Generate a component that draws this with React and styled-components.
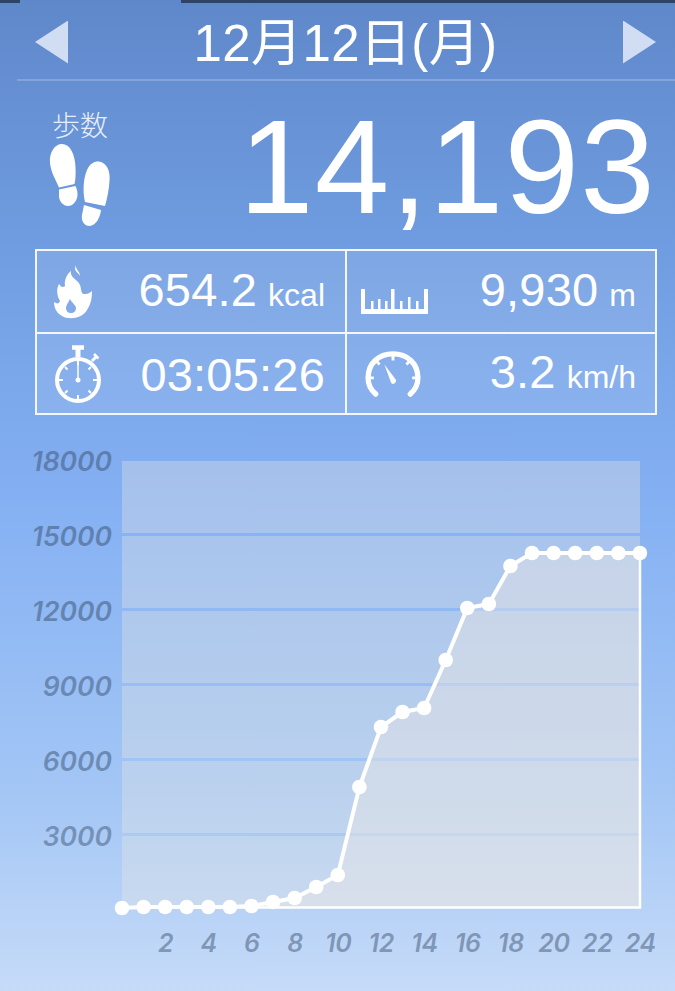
import React from "react";
import styled, { createGlobalStyle } from "styled-components";

const GlobalStyle = createGlobalStyle`
  html, body {
    margin: 0;
    padding: 0;
  }
  body {
    font-family: "Liberation Sans", "Noto Sans CJK JP", sans-serif;
  }
`;

const Page = styled.div`
  width: 675px;
  height: 991px;
  overflow: hidden;
  color: #fff;
  background: linear-gradient(180deg, #5f88ca 0%, #6f9ce0 24%, #84b0f3 50%, #a3c6f5 80%, #c6dbf8 100%);
`;

const TopStrip = styled.div`
  height: 3px;
  display: flex;
`;

const StripPart = styled.div`
  width: ${(p) => p.$width}px;
  flex: ${(p) => (p.$width ? "none" : 1)};
  background: ${(p) => (p.$dark ? "#2e4366" : "transparent")};
`;

const DateBar = styled.div`
  height: 76px;
  margin-left: 17px;
  padding: 0 19px 0 18px;
  display: flex;
  align-items: center;
  justify-content: space-between;
  border-bottom: 2px solid rgba(255, 255, 255, 0.2);
`;

const Arrow = styled.div`
  width: 33px;
  height: 43px;
  margin-top: 2px;
  background: #d0ddf2;
  clip-path: ${(p) =>
    p.$right ? "polygon(0 0, 100% 50%, 0 100%)" : "polygon(100% 0, 0 50%, 100% 100%)"};
`;

const DateText = styled.div`
  font-size: 51px;
  line-height: 60px;
  margin-top: 5px;
  letter-spacing: 0.4px;
`;

const StepsRow = styled.div`
  height: 168px;
  padding: 0 19px 0 49px;
  display: flex;
  align-items: flex-start;
  justify-content: space-between;
`;

const StepsSide = styled.div`
  display: flex;
  flex-direction: column;
  padding-top: 29px;
`;

const StepsLabel = styled.div`
  font-size: 28px;
  line-height: 33px;
  font-weight: 300;
  padding-left: 3px;
  color: #e6eefa;
`;

const StepsValue = styled.div`
  font-size: 134px;
  line-height: 168px;
  letter-spacing: 1.2px;
  margin-top: 2px;
`;

const StatsGrid = styled.div`
  margin: 0 18px 0 35px;
  height: 166px;
  box-sizing: border-box;
  border: 2px solid #f4f8fe;
  display: grid;
  grid-template-columns: 308px 1fr;
  grid-template-rows: 1fr 1fr;
  background: rgba(255, 255, 255, 0.1);
`;

const StatCell = styled.div`
  display: flex;
  align-items: center;
  justify-content: space-between;
  padding: 0 ${(p) => (p.$right ? 19 : 20)}px 0 ${(p) => (p.$right ? 14 : 17)}px;
  border-left: ${(p) => (p.$right ? "2px solid #f4f8fe" : "none")};
  border-top: ${(p) => (p.$lower ? "2px solid #f4f8fe" : "none")};
`;

const IconSlot = styled.div`
  display: flex;
  margin-top: ${(p) => p.$top || 0}px;
  margin-left: ${(p) => p.$left || 0}px;
`;

const StatValue = styled.div`
  font-size: 47px;
  line-height: 52px;
  letter-spacing: 0.2px;
  margin-top: 2px;
`;

const StatUnit = styled.span`
  font-size: 32px;
  letter-spacing: 0;
  margin-left: 11px;
`;

const Chart = styled.div`
  margin-top: 46px;
  display: flex;
`;

const YAxis = styled.div`
  width: 112px;
  margin: -15px 10px 0 0;
  display: flex;
  flex-direction: column;
  align-items: flex-end;
  gap: 45.1px;
`;

const AxisLabel = styled.div`
  font-family: Inter, "Liberation Sans", sans-serif;
  font-size: 26.5px;
  line-height: 30px;
  font-style: italic;
  font-weight: 600;
  color: rgba(70, 95, 130, ${(p) => p.$alpha});
`;

const Plot = styled.div`
  position: relative;
  width: 518px;
  height: 447px;
  display: flex;
  flex-direction: column;
  gap: 3px;
`;

const Band = styled.div`
  flex: 1;
  background: rgba(238, 234, 226, 0.33);
`;

const PlotLines = styled.svg`
  position: absolute;
  left: 0;
  top: 0;
  overflow: visible;
`;

const XAxis = styled.div`
  margin-top: 20px;
  padding-left: 144px;
  display: flex;
`;

const XCell = styled(AxisLabel)`
  width: 43.17px;
  text-align: center;
  font-size: 25px;
  letter-spacing: -0.3px;
  color: rgba(75, 95, 125, 0.55);
`;

const STEP_X = 21.58;
const HEIGHTS = [0, 1, 1, 1, 1, 1, 2, 6, 10, 21, 33, 121, 181, 196, 200, 248, 300, 304, 342, 355, 355, 355, 355, 355, 355];
const PLOT_H = 447;

const points = HEIGHTS.map((h, i) => [i * STEP_X, PLOT_H - h]);
const linePath = points.map(([x, y]) => `${x.toFixed(1)},${y}`).join(" ");

const Footprints = () => (
  <svg width="62" height="84" viewBox="0 0 62 84" fill="#fff">
    <path d="M1 20C0 9 6 1 13 1C21 1 26 11 26.5 24C26.8 31 26.5 37 25.5 41L10 44.5C7 37 2 30 1 20Z" />
    <path d="M10 46.5L26.5 43C30 50 29 58 23 62C16 65 11 60 10 54Z" />
    <path d="M36 59C33.5 48 34.5 35 38 27C41 20 46 18 50 18.5C58 20 61.5 28 60.5 38C60 47 58 56 56 63Z" />
    <path d="M35 62L52 67C51 75 47 82 41 83C35 83 32 78 33 72Z" />
  </svg>
);

const FlameIcon = () => (
  <svg width="40" height="54" viewBox="0 0 40 54" fill="#fff">
    <path d="M22 0C21 4 26 6 26 11C25 8 21 7 21 3Z" />
    <path
      fillRule="evenodd"
      d="M14 53C6 52 0 46 0 37C3 39 5 39 6 36C3 31 2 24 5 19C7 22 9 23 11 21C10 15 13 9 17 6C16 11 20 13 24 17C28 21 26 26 29 29C32 29 35 29 38 26C38 33 37 39 33 45C30 50 24 54 14 53ZM16 34C14 38 12 40 12 43C12 46 14 48 17 48C20 48 22 46 22 43C22 40 18 38 16 34Z"
    />
  </svg>
);

const StopwatchIcon = () => (
  <svg width="50" height="60" viewBox="0 0 50 60" fill="none" stroke="#fff">
    <circle cx="24" cy="36" r="21" strokeWidth="4" />
    <path d="M18 3.5H30" strokeWidth="4.5" />
    <path d="M24 4V13" strokeWidth="5" />
    <path d="M38 17L42 13" strokeWidth="3" />
    <path d="M40 10L44.5 14.5" strokeWidth="2.5" />
    <path d="M24 17V21M24 51V55M5 36H9M39 36H43M11 23L13.5 25.5M37 23L34.5 25.5M11 49L13.5 46.5M37 49L34.5 46.5" strokeWidth="2" />
    <path d="M24 20V35" strokeWidth="1.5" />
    <circle cx="24" cy="36" r="2.5" fill="#fff" stroke="none" />
  </svg>
);

const RulerIcon = () => (
  <svg width="68" height="28" viewBox="0 0 68 28" fill="#fff">
    <rect x="0" y="21" width="67" height="5" />
    <rect x="0" y="1" width="4" height="22" />
    <rect x="63" y="1" width="4" height="22" />
    <rect x="30" y="1" width="3.5" height="22" />
    <rect x="10" y="13" width="2.5" height="10" />
    <rect x="17" y="11" width="2.5" height="12" />
    <rect x="24" y="13" width="2.5" height="10" />
    <rect x="39" y="13" width="2.5" height="10" />
    <rect x="47" y="9" width="2.5" height="14" />
    <rect x="55" y="13" width="2.5" height="10" />
  </svg>
);

const GaugeIcon = () => (
  <svg width="56" height="46" viewBox="0 0 58 48" fill="none" stroke="#fff">
    <path d="M11 45C5 40 3 34 3 28C3 13 14 3 29 3C44 3 55 13 55 28C55 34 53 40 47 45" strokeWidth="5.5" strokeLinecap="round" />
    <path d="M29 3V10M11 10L15 14M47 10L43 14M3 28H9M55 28H49" strokeWidth="3" />
    <path d="M20 14L32 30C33 33 29 36 27 33Z" fill="#fff" stroke="none" />
  </svg>
);

const Y_LABELS = [
  ["18000", 0.6],
  ["15000", 0.6],
  ["12000", 0.6],
  ["9000", 0.58],
  ["6000", 0.56],
  ["3000", 0.54],
];

const App = () => {
  return (
    <Page>
      <GlobalStyle />
      <TopStrip>
        <StripPart $width={20} $dark />
        <StripPart $width={161} />
        <StripPart $dark />
      </TopStrip>

      <DateBar>
        <Arrow />
        <DateText>12月12日(月)</DateText>
        <Arrow $right />
      </DateBar>

      <StepsRow>
        <StepsSide>
          <StepsLabel>歩数</StepsLabel>
          <Footprints />
        </StepsSide>
        <StepsValue>14,193</StepsValue>
      </StepsRow>

      <StatsGrid>
        <StatCell>
          <FlameIcon />
          <StatValue>
            654.2<StatUnit>kcal</StatUnit>
          </StatValue>
        </StatCell>
        <StatCell $right>
          <IconSlot $top={20}>
            <RulerIcon />
          </IconSlot>
          <StatValue>
            9,930<StatUnit>m</StatUnit>
          </StatValue>
        </StatCell>
        <StatCell $lower>
          <StopwatchIcon />
          <StatValue>03:05:26</StatValue>
        </StatCell>
        <StatCell $right $lower>
          <IconSlot $left={4}>
            <GaugeIcon />
          </IconSlot>
          <StatValue>
            3.2<StatUnit>km/h</StatUnit>
          </StatValue>
        </StatCell>
      </StatsGrid>

      <Chart>
        <YAxis>
          {Y_LABELS.map(([label, alpha]) => (
            <AxisLabel key={label} $alpha={alpha}>
              {label}
            </AxisLabel>
          ))}
        </YAxis>
        <Plot>
          {Y_LABELS.map(([label]) => (
            <Band key={label} />
          ))}
          <PlotLines width="518" height={PLOT_H} viewBox={`0 0 518 ${PLOT_H}`}>
            <polygon points={`${linePath} 518,${PLOT_H}`} fill="rgba(236, 232, 228, 0.42)" />
            <path d={`M0 ${PLOT_H - 0.5}H518V92`} fill="none" stroke="#fff" strokeWidth="2.5" />
            <polyline points={linePath} fill="none" stroke="#fff" strokeWidth="4" />
            {points.map(([x, y]) => (
              <circle key={x} cx={x} cy={y} r="7.3" fill="#fff" />
            ))}
          </PlotLines>
        </Plot>
      </Chart>

      <XAxis>
        {[2, 4, 6, 8, 10, 12, 14, 16, 18, 20, 22, 24].map((n) => (
          <XCell key={n}>{n}</XCell>
        ))}
      </XAxis>
    </Page>
  );
};

export default App;
